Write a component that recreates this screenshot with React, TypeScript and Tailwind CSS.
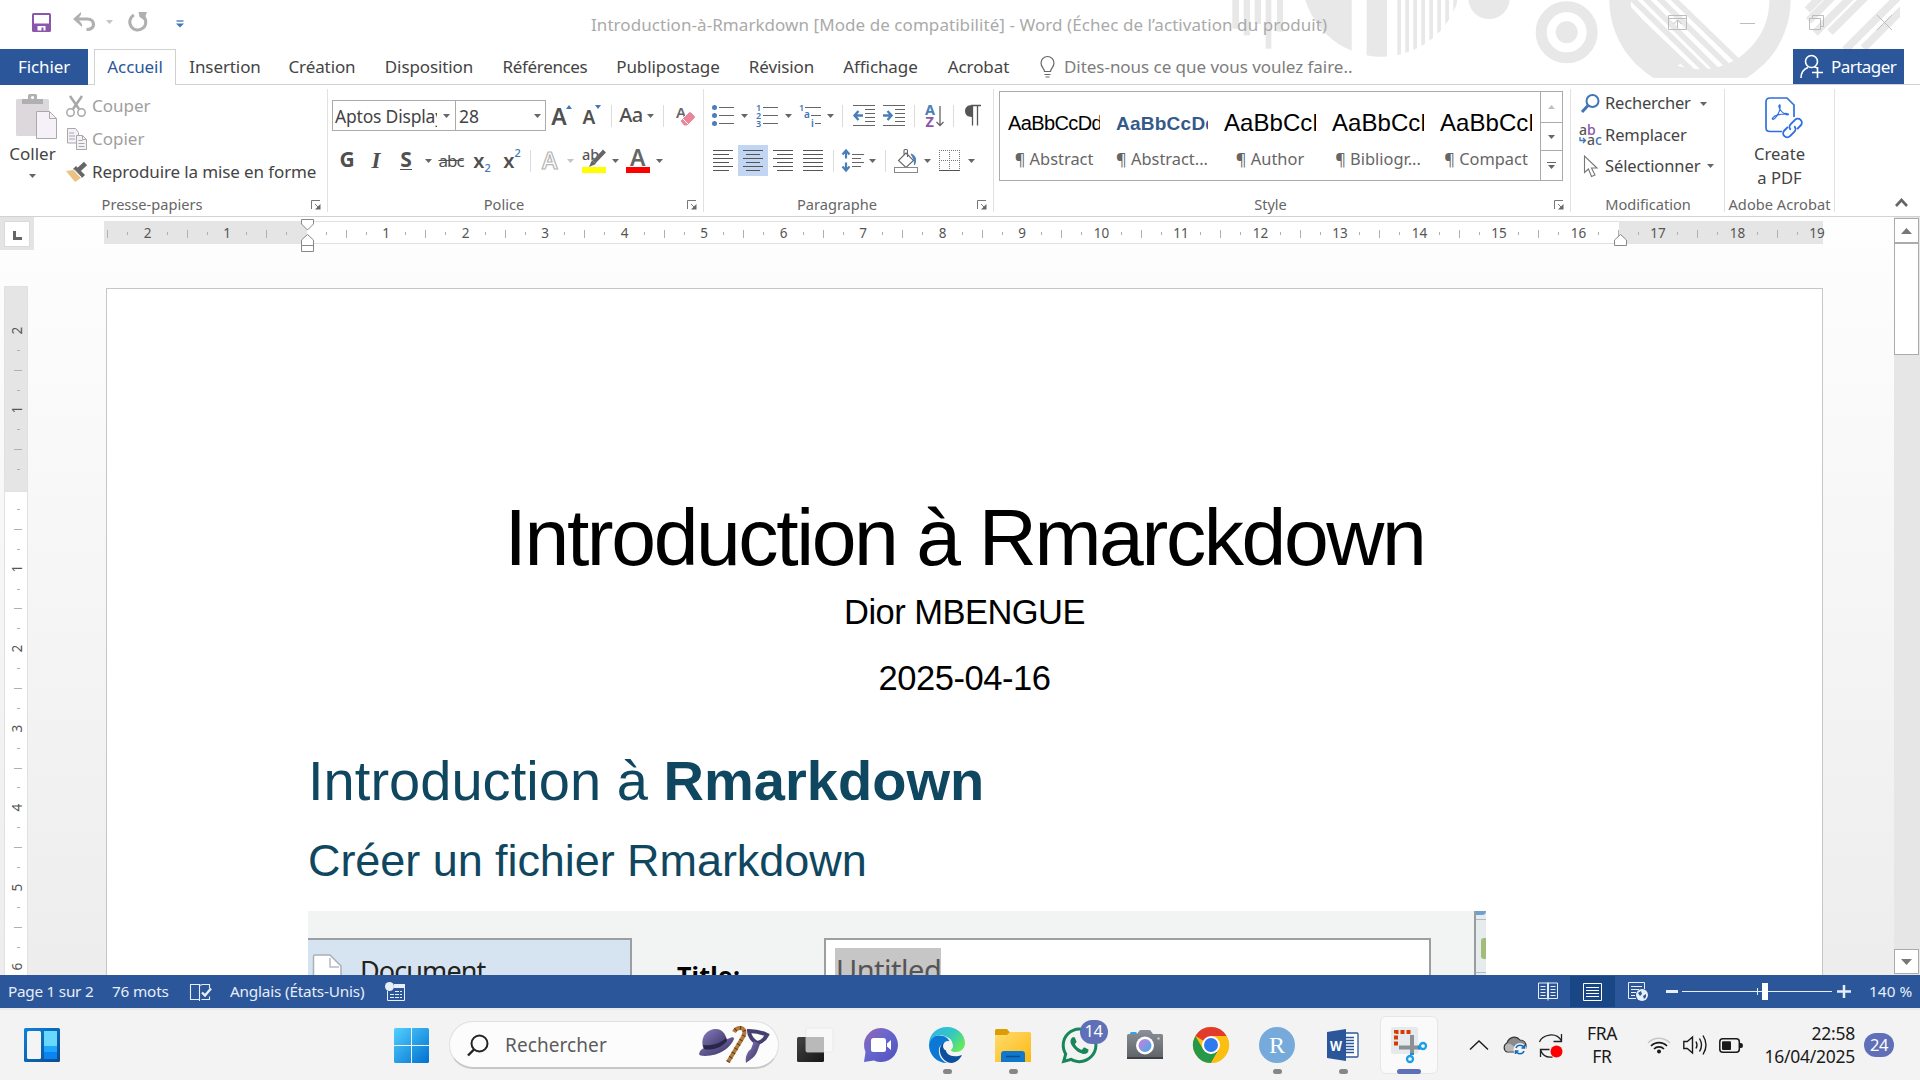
import React from "react";
import { FaWhatsapp } from "react-icons/fa";

type Kids = { children?: React.ReactNode };

/* ---------- small helpers ---------- */
function Ico({ w, h, children, cls = "" }: Kids & { w: number; h: number; cls?: string }) {
  return (
    <svg width={w} height={h} viewBox={`0 0 ${w} ${h}`} fill="none" className={`block shrink-0 overflow-visible ${cls}`}>
      {children}
    </svg>
  );
}

function Slot({ cls, children }: Kids & { cls: string }) {
  return <div className={`flex h-[31px] shrink-0 items-center justify-center ${cls}`}>{children}</div>;
}

function Caret({ color = "#666" }: { color?: string }) {
  return (
    <Ico w={7} h={4}>
      <path d="M0 0h7L3.5 4z" fill={color} />
    </Ico>
  );
}

function Sep({ cls }: { cls: string }) {
  return (
    <Slot cls={cls}>
      <div className="h-[22px] w-px bg-[#dcdcdc]" />
    </Slot>
  );
}

function Launcher() {
  return (
    <Ico w={10} h={10}>
      <path d="M.5 9V.5H9M4 4l3 3" stroke="#777" />
      <path d="M9.5 4v5.5H4z" fill="#666" />
    </Ico>
  );
}

function Group({ cls, label, launcher, labelCls = "", children }: Kids & { cls: string; label: string; launcher?: boolean; labelCls?: string }) {
  return (
    <section className={`relative flex h-[131px] shrink-0 flex-col ${cls}`}>
      <div className="h-[108px]">{children}</div>
      <div className={`flex h-[22px] items-center justify-center whitespace-nowrap text-[14.600px] leading-none text-[#666] ${labelCls}`}>{label}</div>
      {launcher && (
        <div className="absolute bottom-[6px] right-[7px]">
          <Launcher />
        </div>
      )}
      <div className="absolute bottom-[4px] right-0 top-[4px] w-px bg-[#e1e1e1]" />
    </section>
  );
}

/* ---------- title bar ---------- */
function Decoration() {
  const bars = [310, 592, 616, 640, 664, 688, 712, 736, 760];
  return (
    <svg width="700" height="78" viewBox="0 0 2100 234" className="absolute left-[1200px] top-0">
      <defs>
        <clipPath id="disc"><circle cx="545" cy="-69" r="239" /></clipPath>
        <clipPath id="inner"><circle cx="1500" cy="0" r="212" /></clipPath>
      </defs>
      <g fill="#e8e8e8">
        <rect x="97" width="20" height="86" />
        <rect x="131" width="19" height="106" />
        <rect x="164" width="19" height="72" />
        <rect x="197" width="17" height="146" />
        <rect x="231" width="18" height="95" />
        <g clipPath="url(#disc)">
          {bars.map((x, i) => (
            <rect key={x} x={i === 0 ? 300 : x} width={i === 0 ? 155 : 11} height="180" />
          ))}
          <rect x="500" width="61" height="180" />
        </g>
        <circle cx="867" cy="-5" r="62" />
        <circle cx="1100" cy="97" r="33" />
      </g>
      <circle cx="1100" cy="97" r="76.5" fill="none" stroke="#e8e8e8" strokeWidth="33" />
      <circle cx="1500" cy="0" r="240" fill="none" stroke="#e8e8e8" strokeWidth="64" />
      <g stroke="#e8e8e8" clipPath="url(#inner)">
        <path d="M1258 30 L1420 210" strokeWidth="64" />
        <path d="M1290 35 L1500 235M1290 -10 L1530 225M1330 -10 L1560 220M1372 -10 L1590 205M1414 -10 L1620 190" strokeWidth="17" />
      </g>
      <g stroke="#e8e8e8" strokeWidth="23">
        <path d="M1822 30 L1862 -10M1826 62 L1905 -17M1845 99 L1955 -11M1890 97 L2000 -13M1935 150 L2095 -10M1990 145 L2140 -5" />
      </g>
    </svg>
  );
}

function TitleBar() {
  return (
    <div className="relative flex h-[49px] items-center">
      <div className="flex w-[200px] items-center pb-[5px] pl-[32px]">
        <Ico w={19} h={19}>
          <path d="M0 1.500q0-1.500 1.500-1.500h16q1.500 0 1.500 1.500v16q0 1.500-1.500 1.500h-16Q0 19 0 17.500z" fill="#8a57ad" />
          <path d="M2 2h15v8.500H2z" fill="#fff" />
          <path d="M5.500 17.500v-4.500h8v4.500h-2v-3h-2v3z" fill="#fff" />
        </Ico>
        <Ico w={22} h={20} cls="ml-[22px]">
          <path d="M3 7h11c5 0 6.500 3 6.500 5.500 0 3.500-3 5-7 5" stroke="#b0b0b0" strokeWidth="3.200" />
          <path d="M0 7L8 0v2.500L5 7l4 5v3z" fill="#b0b0b0" />
        </Ico>
        <div className="ml-[11px]"><Caret color="#c4c4c4" /></div>
        <Ico w={20} h={20} cls="ml-[15px]">
          <path d="M6 3A8 8 0 1 0 15 4" stroke="#b0b0b0" strokeWidth="3" />
          <path d="M10.500 0h8.500l-3 8-4.500-3z" fill="#b0b0b0" />
        </Ico>
        <Ico w={8} h={8} cls="ml-[28px] mt-1">
          <path d="M.5 1h7" stroke="#4076b4" strokeWidth="1.300" />
          <path d="M0 3.500h8l-4 4z" fill="#4076b4" />
        </Ico>
      </div>
      <div className="relative z-10 ml-[391px] w-[740px] whitespace-nowrap text-[17px] leading-none tracking-[0.060px] text-[#aaa]">
        Introduction-à-Rmarkdown [Mode de compatibilité] - Word (Échec de l’activation du produit)
      </div>
      <div className="relative z-10 ml-[337px] flex w-[224px] items-center justify-between pb-[4px]">
        <Ico w={19} h={15}>
          <path d="M.5.5h18v14H.5zM.5 3.500h18M9.500 13V5M5.500 9l4-4 4 4" stroke="#bdbdbd" />
        </Ico>
        <Ico w={15} h={15} cls="ml-[5px]"><path d="M0 8.500h15" stroke="#bdbdbd" /></Ico>
        <Ico w={15} h={15} cls="ml-[5px]"><path d="M.5 3.500h11v11H.5zM3.500 3V.5h11v11H12" stroke="#bdbdbd" /></Ico>
        <Ico w={15} h={15} cls="ml-[5px]"><path d="M0 0l15 15M15 0L0 15" stroke="#bdbdbd" /></Ico>
      </div>
    </div>
  );
}

/* ---------- tabs ---------- */
function Tabs() {
  const tab = "flex h-[36px] shrink-0 items-center justify-center whitespace-nowrap border-b border-[#d2d2d2] pb-px";
  return (
    <nav className="relative z-10 flex h-[36px] text-[17px] leading-none tracking-[-0.1px] text-[#444]">
      <div className="flex w-[88px] items-center justify-center bg-[#2b579a] pb-[2px] text-white">Fichier</div>
      <div className="w-[6px] border-b border-[#d2d2d2]" />
      <div className="flex w-[82px] items-center justify-center border-x border-t border-[#d2d2d2] bg-white pb-[3px] text-[#2b579a]">Accueil</div>
      <div className={`${tab} w-[98px]`}>Insertion</div>
      <div className={`${tab} w-[96px]`}>Création</div>
      <div className={`${tab} w-[118px]`}>Disposition</div>
      <div className={`${tab} w-[114px] tracking-[-0.350px]`}>Références</div>
      <div className={`${tab} w-[132px]`}>Publipostage</div>
      <div className={`${tab} w-[95px]`}>Révision</div>
      <div className={`${tab} w-[103px]`}>Affichage</div>
      <div className={`${tab} w-[93px]`}>Acrobat</div>
      <div className="flex flex-1 items-center border-b border-[#d2d2d2] pl-[15px] text-[#7d7d7d]">
        <Ico w={15} h={22}>
          <path d="M4.500 15.500c0-3-3.500-4-3.500-8.500a6.500 6.500 0 0 1 13 0c0 4.500-3.500 5.500-3.500 8.500zM4.500 18.500h6M5.500 21h4" stroke="#666" strokeWidth="1.200" />
        </Ico>
        <span className="ml-[9px] text-[17px] tracking-[-0.040px]">Dites-nous ce que vous voulez faire..</span>
      </div>
      <div className="w-[111px] border-b border-[#d2d2d2]">
        <div className="flex h-[35px] items-center bg-[#2b579a] pl-[7px] text-white">
          <Ico w={24} h={25}>
            <path d="M1 24c0-6 3-9 7-10.500M17 14c-1-.7-2-1-3-1.300" stroke="#fff" strokeWidth="1.600" />
            <circle cx="11.500" cy="7.500" r="6" stroke="#fff" strokeWidth="1.600" />
            <path d="M17.500 13v11M12 18.500h11" stroke="#fff" strokeWidth="1.600" />
          </Ico>
          <span className="ml-[7px] tracking-[-0.550px]">Partager</span>
        </div>
      </div>
      <div className="w-[16px] border-b border-[#d2d2d2]" />
    </nav>
  );
}

/* ---------- ribbon ---------- */
function Clipboard() {
  return (
    <Group cls="w-[328px]" label="Presse-papiers" launcher labelCls="pr-[24px]">
      <div className="flex">
        <div className="flex w-[66px] flex-col items-center pr-px pt-[9px]">
          <Ico w={41} h={46} cls="ml-[8px]">
            <rect x="0" y="5" width="33" height="37" rx="1.500" fill="#dcd8dc" />
            <path d="M6 10V5h6V1.500Q12 0 13.500 0h6Q21 0 21 1.500V5h6v5z" fill="#b0b0b0" />
            <circle cx="16.500" cy="3.500" r="1.600" fill="#fff" />
            <path d="M20.500 17.500h13l7 7v20h-20z" fill="#f6f1f8" stroke="#aaa" />
            <path d="M33.500 17.500v7h7" stroke="#aaa" />
          </Ico>
          <div className="mt-[5px] text-[17px] leading-none text-[#444]">Coller</div>
          <div className="mt-[12px]"><Caret /></div>
        </div>
        <div className="flex flex-col pt-[4px] text-[17px] leading-none text-[#a0a0a0]">
          <div className="flex h-[33px] items-center">
            <Ico w={21} h={22}>
              <circle cx="4.500" cy="17.500" r="3.700" stroke="#a8a8a8" strokeWidth="1.500" />
              <circle cx="15.500" cy="17.500" r="3.700" stroke="#a8a8a8" strokeWidth="1.500" />
              <path d="M4 1l9 13M16 1L7 14" stroke="#a8a8a8" strokeWidth="2.500" />
            </Ico>
            <span className="ml-[5px]">Couper</span>
          </div>
          <div className="flex h-[33px] items-center">
            <Ico w={21} h={22}>
              <path d="M1.500.5h8l3 4V15h-11z" fill="#f6f1f8" stroke="#a8a8a8" />
              <path d="M3 5h5M3 8h6M3 11h6" stroke="#a8a8a8" />
              <path d="M10.500 7.500h6l4 4v10h-10z" fill="#f6f1f8" stroke="#a8a8a8" />
              <path d="M12.500 12.500h4M12.500 15.500h6M12.500 18.500h6M16.500 7.500v4h4" stroke="#a8a8a8" />
            </Ico>
            <span className="ml-[5px]">Copier</span>
          </div>
          <div className="flex h-[33px] items-center text-[#444]">
            <Ico w={22} h={20}>
              <path d="M0 9L7 8l8 8-6 4z" fill="#eac282" />
              <path d="M7 7l3-3 9 9-3 3z" fill="#666" />
              <path d="M12.500 8l7-6.500" stroke="#666" strokeWidth="4.500" />
              <path d="M8 7.500l7.500 8" stroke="#fff" />
            </Ico>
            <span className="ml-[4px] whitespace-nowrap text-[17px] tracking-[-0.120px]">Reproduire la mise en forme</span>
          </div>
        </div>
      </div>
    </Group>
  );
}

function FontGroup() {
  return (
    <Group cls="w-[376px]" label="Police" launcher labelCls="pr-[24px]">
      <div className="pl-[4px] pt-[15px] text-[#505050]">
        <div className="flex leading-none">
          <div className="flex h-[31px] w-[124px] items-center border border-[#ababab] pl-[2px] pr-[4px] text-[17.500px] text-[#444]">
            <span className="w-[102px] overflow-hidden whitespace-nowrap pb-[3px] pt-[5px] tracking-[-0.200px]">Aptos Display</span>
            <div className="ml-[6px]"><Caret /></div>
          </div>
          <div className="-ml-px flex h-[31px] w-[91px] items-center justify-between border border-[#ababab] pl-[3px] pr-[4px] text-[17.500px] text-[#444]">
            <span className="pt-[2px]">28</span><Caret />
          </div>
          <Slot cls="w-[31px]">
            <span className="pt-[2px] text-[23px] font-semibold leading-none">A</span>
            <Ico w={6} h={4} cls="-ml-[1px] -mt-[18px]"><path d="M0 4l3-4 3 4z" fill="#4076b4" /></Ico>
          </Slot>
          <Slot cls="w-[30px]">
            <span className="pt-[4px] text-[19px] font-semibold leading-none">A</span>
            <Ico w={6} h={4} cls="-mt-[18px]"><path d="M0 0l3 4 3-4z" fill="#4076b4" /></Ico>
          </Slot>
          <Sep cls="w-[8px]" />
          <Slot cls="w-[32px]"><span className="pb-[2px] text-[20px] font-medium tracking-[-0.5px]">Aa</span></Slot>
          <Slot cls="w-[6px]"><Caret /></Slot>
          <Sep cls="w-[20px]" />
          <Slot cls="w-[26px]">
            <Ico w={20} h={22}>
              <text x="0" y="13" fontSize="15" fontFamily="Noto Sans" fontWeight="600" fill="#666">A</text>
              <path d="M4 16L13 7q1-1 2 0l4 4q1 1 0 2l-8 8h-3z" fill="#e8869a" stroke="#fff" />
              <path d="M6.500 13.500l6 6" stroke="#fff" />
            </Ico>
          </Slot>
        </div>
        <div className="mt-[14px] flex leading-none">
          <Slot cls="w-[30px]"><span className="pb-[2px] text-[21px] font-bold">G</span></Slot>
          <Slot cls="w-[28px]"><span className="pb-px font-[Liberation_Serif] text-[23px] font-bold italic">I</span></Slot>
          <Slot cls="w-[32px]"><span className="mb-px border-b border-[#505050] pb-px text-[21px] font-bold leading-[17px]">S</span></Slot>
          <Slot cls="w-[13px]"><Caret /></Slot>
          <Slot cls="w-[32px]"><span className="text-[17px] leading-none tracking-[-1px] line-through">abc</span></Slot>
          <Slot cls="w-[30px]"><span className="text-[20px] font-semibold">x</span><span className="pt-[14px] text-[11px] font-medium text-[#4076b4]">2</span></Slot>
          <Slot cls="w-[30px]"><span className="text-[20px] font-semibold">x</span><span className="pb-[16px] text-[11px] font-medium text-[#4076b4]">2</span></Slot>
          <Sep cls="w-[7px]" />
          <Slot cls="w-[32px]">
            <Ico w={18} h={20}>
              <text x="1" y="18" fontSize="23" fontFamily="Noto Sans" fontWeight="600" fill="#fff" stroke="#b5b5b5" strokeWidth="1.200">A</text>
            </Ico>
          </Slot>
          <Slot cls="w-[8px]"><Caret color="#c4c4c4" /></Slot>
          <Slot cls="w-[40px]">
            <Ico w={24} h={24}>
              <text x="0" y="11" fontSize="14.500" fontFamily="Noto Sans" fontWeight="500" fill="#555">ab</text>
              <path d="M22.500 2L12 13" stroke="#666" strokeWidth="4" />
              <path d="M10 11l4 4-7 3z" fill="#666" />
              <rect y="18" width="24" height="6" fill="#ff0" />
            </Ico>
          </Slot>
          <Slot cls="w-[3px]"><Caret /></Slot>
          <Slot cls="w-[41px]">
            <Ico w={24} h={24}>
              <text x="4" y="17" fontSize="23" fontFamily="Noto Sans" fontWeight="600" fill="#666">A</text>
              <rect y="18" width="24" height="6" fill="#f00" />
            </Ico>
          </Slot>
          <Slot cls="w-[3px]"><Caret /></Slot>
        </div>
      </div>
    </Group>
  );
}

function Lines({ d }: { d: string }) {
  return <Ico w={20} h={21}><path d={d} stroke="#555" /></Ico>;
}

function Paragraph() {
  const t = { fontFamily: "Noto Sans", fontWeight: 600, fill: "#4076b4" };
  return (
    <Group cls="w-[290px]" label="Paragraphe" launcher labelCls="pr-[24px]">
      <div className="pl-[4px] pt-[15px]">
        <div className="flex pl-px">
          <Slot cls="w-[28px]">
            <Ico w={22} h={21}>
              <circle cx="2.500" cy="2.500" r="2.500" fill="#4a7ebb" /><circle cx="2.500" cy="10.500" r="2.500" fill="#4a7ebb" /><circle cx="2.500" cy="18.500" r="2.500" fill="#4a7ebb" />
              <path d="M7 2.500h15M7 10.500h15M7 18.500h15" stroke="#666" />
            </Ico>
          </Slot>
          <Slot cls="w-[14px]"><Caret /></Slot>
          <Slot cls="w-[31px]">
            <Ico w={22} h={21}>
              <text {...t} fontSize="9" x="0" y="6">1</text><text {...t} fontSize="9" x="0" y="14">2</text><text {...t} fontSize="9" x="0" y="22">3</text>
              <path d="M7 2.500h15M7 10.500h15M7 18.500h15" stroke="#666" />
            </Ico>
          </Slot>
          <Slot cls="w-[13px]"><Caret /></Slot>
          <Slot cls="w-[30px]">
            <Ico w={22} h={21}>
              <text {...t} fontSize="9" x="0" y="6">1</text><text {...t} fontSize="10" x="5" y="13">a</text><text {...t} fontSize="10" x="12" y="22">i</text>
              <path d="M6 2.500h16M12 10.500h10M16 18.500h6" stroke="#666" />
            </Ico>
          </Slot>
          <Slot cls="w-[10px]"><Caret /></Slot>
          <Sep cls="w-[14px]" />
          <Slot cls="w-[30px]">
            <Ico w={22} h={21}>
              <path d="M0 .5h22M12 4.500h10M12 8.500h10M12 12.500h10M12 16.500h10M0 20.500h22" stroke="#666" />
              <path d="M10 10.500H2M5.500 6l-4 4.500 4 4.500" stroke="#4a7ebb" strokeWidth="2.400" />
            </Ico>
          </Slot>
          <Slot cls="w-[30px]">
            <Ico w={22} h={21}>
              <path d="M0 .5h22M12 4.500h10M12 8.500h10M12 12.500h10M12 16.500h10M0 20.500h22" stroke="#666" />
              <path d="M0 10.500h8M4.500 6l4 4.500-4 4.500" stroke="#4a7ebb" strokeWidth="2.400" />
            </Ico>
          </Slot>
          <Sep cls="w-[10px]" />
          <Slot cls="w-[30px]">
            <Ico w={19} h={22}>
              <text x="0" y="10" fontFamily="Noto Sans" fontSize="14.500" fontWeight="700" fill="#4a7ebb">A</text>
              <text x=".5" y="22" fontFamily="Noto Sans" fontSize="14.500" fontWeight="700" fill="#8a57ad">Z</text>
              <path d="M15 1v19M11.500 17l3.500 3.500 3.500-3.500" stroke="#666" strokeWidth="1.300" />
            </Ico>
          </Slot>
          <Sep cls="w-[9px]" />
          <Slot cls="w-[30px]">
            <Ico w={16} h={21}>
              <path d="M6 .5h10M7.500 1v19.500M12.500 1v19.500" stroke="#555" strokeWidth="1.300" />
              <path d="M7 0v12C2 12 0 9 0 6s2-6 7-6z" fill="#555" />
            </Ico>
          </Slot>
        </div>
        <div className="mt-[14px] flex">
          <Slot cls="w-[30px]"><Lines d="M0 .5h20M0 4.500h16M0 8.500h20M0 12.500h16M0 16.500h20M0 20.500h16" /></Slot>
          <Slot cls="w-[30px] bg-[#c2d5f2]"><Lines d="M0 .5h20M3 4.500h14M0 8.500h20M3 12.500h14M0 16.500h20M3 20.500h14" /></Slot>
          <Slot cls="w-[30px]"><Lines d="M0 .5h20M4 4.500h16M0 8.500h20M4 12.500h16M0 16.500h20M4 20.500h16" /></Slot>
          <Slot cls="w-[30px]"><Lines d="M0 .5h20M0 4.500h20M0 8.500h20M0 12.500h20M0 16.500h20M0 20.500h20" /></Slot>
          <Sep cls="w-[10px]" />
          <Slot cls="w-[29px]">
            <Ico w={22} h={23}>
              <path d="M4 1.500v8M4 13.500v8M.5 5.500l3.500-4 3.500 4M.5 17.500l3.500 4 3.500-4" stroke="#4a7ebb" strokeWidth="2.200" />
              <path d="M10 5.500h12M10 9.500h9M10 13.500h12M10 17.500h9" stroke="#666" />
            </Ico>
          </Slot>
          <Slot cls="w-[11px]"><Caret /></Slot>
          <Sep cls="w-[14px]" />
          <Slot cls="w-[28px]">
            <Ico w={24} h={24}>
              <path d="M12 4l7.500 7.500L12 18.500 4.500 11.500zM10 6V1.500q0-1 1-1h1.500q1 0 1 1V8" stroke="#666" strokeWidth="1.100" />
              <path d="M17 5c4 1 6 5 3.500 11 0-5-1-7-3.500-11z" fill="#4a7ebb" stroke="#4a7ebb" />
              <rect x=".5" y="18.500" width="23" height="5" fill="#fff" stroke="#888" />
            </Ico>
          </Slot>
          <Slot cls="w-[15px]"><Caret /></Slot>
          <Slot cls="w-[29px]">
            <Ico w={21} h={21}>
              <path d="M.5 0v20M10.500 0v20M20.500 0v20M0 .5h21M0 10.500h21" stroke="#777" strokeDasharray="1 1" />
              <path d="M0 20.500h21" stroke="#555" />
            </Ico>
          </Slot>
          <Slot cls="w-[15px]"><Caret /></Slot>
        </div>
      </div>
    </Group>
  );
}

function Styles() {
  const items = [
    ["AaBbCcDd", "¶ Abstract", "text-[20px] tracking-[-0.600px] text-black"],
    ["AaBbCcDd", "¶ Abstract...", "text-[19px] font-bold tracking-[0.250px] text-[#345a8a]"],
    ["AaBbCcDd", "¶ Author", "text-[24px] tracking-[0.050px] text-black"],
    ["AaBbCcDd", "¶ Bibliogr...", "text-[24px] tracking-[0.050px] text-black"],
    ["AaBbCcDd", "¶ Compact", "text-[24px] tracking-[0.050px] text-black"],
  ];
  return (
    <Group cls="w-[577px]" label="Style" launcher labelCls="pr-[24px]">
      <div className="pl-[5px] pt-[6px]">
        <div className="flex h-[90px] w-[564px] border border-[#ababab]">
          {items.map(([a, b, c]) => (
            <div key={b} className="flex w-[108px] shrink-0 flex-col items-center">
              <div className={`mt-[16px] flex h-[30px] w-[92px] items-center overflow-hidden whitespace-nowrap font-[Liberation_Sans] leading-none ${c}`}>{a}</div>
              <div className="mt-[13px] whitespace-nowrap text-[16.400px] leading-none text-[#666]">{b}</div>
            </div>
          ))}
          <div className="flex flex-1 flex-col border-l border-[#ababab]">
            <div className="flex h-[30px] items-center justify-center"><Ico w={7} h={4}><path d="M0 4h7L3.500 0z" fill="#c0c0c0" /></Ico></div>
            <div className="flex h-[28px] items-center justify-center border-t border-[#ababab]"><Caret /></div>
            <div className="flex flex-1 flex-col items-center justify-center gap-[2px] border-t border-[#ababab]">
              <div className="h-px w-[9px] bg-[#666]" />
              <Caret />
            </div>
          </div>
        </div>
      </div>
    </Group>
  );
}

function Ribbon() {
  return (
    <div className="flex h-[132px] border-b border-[#d2d2d2]">
      <Clipboard />
      <FontGroup />
      <Paragraph />
      <Styles />
      <Group cls="w-[154px]" label="Modification">
        <div className="flex flex-col pl-[8px] pt-[3px] text-[17px] leading-none text-[#444]">
          <div className="flex h-[31px] items-center">
            <Ico w={22} h={20}>
              <circle cx="13.500" cy="7" r="6" stroke="#4076b4" strokeWidth="2" />
              <path d="M9 11.500L3 18" stroke="#4076b4" strokeWidth="3" />
            </Ico>
            <span className="ml-[4px] w-[86px] text-[16.500px] tracking-[-0.200px]">Rechercher</span>
            <div className="ml-[9px]"><Caret /></div>
          </div>
          <div className="flex h-[31px] items-center pt-px">
            <Ico w={22} h={22}>
              <text x="0" y="10.500" fontFamily="Noto Sans" fontSize="14" fontWeight="500" fill="#555">a<tspan fill="#8a57ad">b</tspan></text>
              <text x="8" y="21" fontFamily="Noto Sans" fontSize="14" fontWeight="500" fill="#555">a<tspan fill="#4076b4">c</tspan></text>
              <path d="M1 13v3.500h5M4 14l2.500 2.500L4 19" stroke="#4076b4" strokeWidth="1.300" />
            </Ico>
            <span className="ml-[4px] text-[16.500px] tracking-[-0.120px]">Remplacer</span>
          </div>
          <div className="flex h-[31px] items-center pt-px">
            <Ico w={22} h={22}>
              <path d="M5.500 1v16.500l4-3.500 3 7.500 3.500-1.500-3.500-7h5.500z" stroke="#777" strokeWidth="1.100" />
            </Ico>
            <span className="ml-[4px] w-[97px] text-[16.500px] tracking-[-0.100px]">Sélectionner</span>
            <div className="ml-[5px]"><Caret /></div>
          </div>
        </div>
      </Group>
      <Group cls="w-[110px]" label="Adobe Acrobat" labelCls="pr-px tracking-[0.040px]">
        <div className="flex flex-col items-center pr-px pt-[12px] text-[16.600px] leading-[24px] text-[#444]">
          <Ico w={38} h={42} cls="ml-[8px]">
            <path d="M17 34.500H5q-4 0-4-4V5q0-4 4-4h17l7 7v12" stroke="#2f6fe0" strokeWidth="1.700" />
            <path d="M7 22c2-4 6-5 14-5M7 22c3 2 9-8 8-14-2-1-2 6 7 10 3 0 1-2-3-1.500" stroke="#2f6fe0" strokeWidth="1.200" />
            <g transform="rotate(-45 27.500 31)" stroke="#2f6fe0" strokeWidth="1.900">
              <path d="M25 27h-5a4 4 0 0 0 0 8h6a4 4 0 0 0 4-4M30 35h5a4 4 0 0 0 0-8h-6a4 4 0 0 0-4 4" />
            </g>
          </Ico>
          <div className="mt-[3px]">Create</div>
          <div>a PDF</div>
        </div>
      </Group>
      <div className="flex flex-1 items-end justify-end pb-[9px] pr-[12px]">
        <Ico w={13} h={9}><path d="M1 8l5.500-6L12 8" stroke="#666" strokeWidth="2.600" /></Ico>
      </div>
    </div>
  );
}

/* ---------- rulers ---------- */
function marks(from: number, to: number) {
  const out: { v: number; kind: "num" | "half" | "quarter" }[] = [];
  for (let q = from * 4; q <= to * 4; q++) {
    out.push({ v: q / 4, kind: q % 4 === 0 ? "num" : q % 2 === 0 ? "half" : "quarter" });
  }
  return out;
}

function HorizontalRuler() {
  return (
    <div className="flex h-[34px] shrink-0">
      <div className="flex h-[33px] w-[34px] items-center justify-center bg-[#e4e4e4]">
        <div className="flex h-[26px] w-[26px] items-center justify-center border border-[#dadada] bg-white">
          <Ico w={9} h={9} cls="mt-[3px]"><path d="M1.500 0v7.500H9" stroke="#666" strokeWidth="3" /></Ico>
        </div>
      </div>
      <div className="relative ml-[70px] mt-[4px] flex h-[23px] w-[1719px]">
        <div className="w-[203px] bg-[#e5e5e5]" />
        <div className="w-[1312px] border-y border-[#e1e1e1] bg-white" />
        <div className="flex-1 bg-[#e5e5e5]" />
        <div className="absolute left-[-6.200px] top-px flex h-[23px] items-center">
          {marks(-2.5, 19).map((m) => (
            <div key={m.v} className="flex w-[19.885px] shrink-0 justify-center text-[13.500px] leading-none text-[#555]">
              {m.kind === "num" ? (m.v === 0 ? "" : Math.abs(m.v)) : <div className={m.kind === "half" ? "h-[8px] w-px bg-[#b0b0b0]" : "h-[3px] w-px bg-[#b0b0b0]"} />}
            </div>
          ))}
        </div>
        <Ico w={13} h={31} cls="absolute left-[197px] top-[-2px]">
          <path d="M.5.500h12V5l-6 6-6-6z" fill="#fff" stroke="#888" />
          <path d="M.5 32.500V21l6-5.500 6 5.500v11.500zM.5 26.500h12" fill="#fff" stroke="#888" />
        </Ico>
        <Ico w={13} h={12} cls="absolute left-[1510px] top-[13px]">
          <path d="M.5 11.500V6l6-5.500 6 5.500v5.500z" fill="#fff" stroke="#888" />
        </Ico>
      </div>
    </div>
  );
}

function VerticalRuler() {
  return (
    <div className="relative ml-[4px] mt-[35px] flex w-[24px] flex-col overflow-hidden border-x border-t border-[#e1e1e1] bg-white">
      <div className="h-[205px] shrink-0 border-b border-[#e1e1e1] bg-[#e5e5e5]" />
      <div className="absolute left-px top-[33.500px] flex w-[24px] flex-col">
        {marks(-2, 6).map((m) => (
          <div key={m.v} className="flex h-[19.900px] shrink-0 items-center justify-center text-[13.500px] leading-none text-[#555]">
            {m.kind === "num" ? (
              <span className="-rotate-90">{m.v === 0 ? "" : Math.abs(m.v)}</span>
            ) : (
              <div className={m.kind === "half" ? "h-px w-[8px] bg-[#b0b0b0]" : "h-px w-[3px] bg-[#b0b0b0]"} />
            )}
          </div>
        ))}
      </div>
    </div>
  );
}

/* ---------- document ---------- */
function EmbeddedDialog() {
  return (
    <div className="ml-[201px] flex h-[64px] w-[1178px] overflow-hidden bg-[#f2f4f4]">
      <div className="mt-[27px] flex h-[60px] w-[324px] border-r-2 border-t-2 border-[#9c9fa2] bg-[#d5e4f0] text-[28px] leading-none text-[#222]">
        <Ico w={32} h={36} cls="ml-[4px] mt-[14px]">
          <path d="M1.500 36V2.500Q1.500 1 3 1h15l11 11v24z" fill="#fff" stroke="#a8b0b8" strokeWidth="1.500" />
          <path d="M18 4v9h9" stroke="#b8bcc0" strokeWidth="1.500" />
        </Ico>
        <div className="ml-[16px] mt-[17px] text-[27px] tracking-[-0.900px]">Document</div>
      </div>
      <div className="ml-[45px] mt-[52px] w-[147px] text-[25px] font-bold leading-none tracking-[0.150px] text-black">Title:</div>
      <div className="mt-[27px] h-[60px] w-[607px] border-x-2 border-t-2 border-[#9c9fa2] bg-white pl-[9px] pt-[8px]">
        <div className="h-[50px] w-[106px] bg-[#c6c6c6] pl-px pt-[7px] text-[29px] leading-none tracking-[-0.500px] text-[#555]">Untitled</div>
      </div>
      <div className="ml-[43px] h-[64px] w-[12px] border-l-2 border-[#9a9da0] bg-[#e6ebed]">
        <div className="h-[4px] w-[10px] rounded-br-full bg-[#6fa0cf]" />
        <div className="mt-[4px] h-px bg-[#b5b9bb]" />
        <div className="ml-[5px] mt-[18px] h-[21px] w-[5px] rounded-l-[3px] bg-[#a3bd78]" />
        <div className="mt-[13px] h-px bg-[#b5b9bb]" />
      </div>
    </div>
  );
}

function Page() {
  return (
    <article className="ml-[78px] mt-[37px] w-[1717px] overflow-hidden border-x border-t border-[#c6c6c6] bg-white font-[Liberation_Sans] text-black">
      <div className="flex flex-col items-center">
        <h1 className="mt-[203px] h-[90px] whitespace-nowrap text-[80.500px] leading-[90px] tracking-[-2.400px]">Introduction à Rmarckdown</h1>
        <p className="mt-[11px] h-[38px] whitespace-nowrap text-[34.500px] leading-[38px] tracking-[-0.530px]">Dior MBENGUE</p>
        <p className="mt-[28px] h-[38px] whitespace-nowrap text-[34.500px] leading-[38px] tracking-[-0.430px]">2025-04-16</p>
      </div>
      <h2 className="ml-[201px] mt-[52px] h-[64px] whitespace-nowrap text-[56px] leading-[64px] tracking-[0.040px] text-[#0f4761]">
        Introduction à <b>Rmarkdown</b>
      </h2>
      <h3 className="ml-[201px] mt-[22px] h-[52px] whitespace-nowrap text-[45px] leading-[52px] tracking-[-0.060px] text-[#0f4761]">Créer un fichier Rmarkdown</h3>
      <div className="mt-[24px] font-[Noto_Sans]"><EmbeddedDialog /></div>
    </article>
  );
}

function ScrollBar() {
  return (
    <div className="ml-auto flex w-[26px] flex-col bg-[#e6e6e6] pb-px pr-px pt-px">
      <div className="flex h-[25px] items-center justify-center border border-[#ababab] bg-white"><Ico w={11} h={6}><path d="M0 6h11L5.500 0z" fill="#777" /></Ico></div>
      <div className="h-[112px] border border-[#ababab] bg-white" />
      <div className="mt-auto flex h-[25px] items-center justify-center border border-[#ababab] bg-white"><Ico w={11} h={6}><path d="M0 0h11L5.500 6z" fill="#777" /></Ico></div>
    </div>
  );
}

/* ---------- status bar ---------- */
function StatusBar() {
  return (
    <footer className="flex h-[33px] items-center whitespace-nowrap bg-[#2b579a] pl-[8px] text-[15.300px] leading-none tracking-[-0.180px] text-[#e8eef7]">
      <span className="w-[104px] tracking-[-0.250px]">Page 1 sur 2</span>
      <span className="w-[78px]">76 mots</span>
      <Ico w={21} h={18}>
        <path d="M9.500 16.500h-9V1.500h9zM9.500 1.500l2 1M9.500 16.500V18M11.500 1.500h8v4M11.500 16.500h8v-3" stroke="#e8eef7" strokeWidth="1.100" />
        <path d="M12 9.500l3 3 6-7" stroke="#e8eef7" strokeWidth="2.400" />
      </Ico>
      <span className="ml-[19px] w-[155px]">Anglais (États-Unis)</span>
      <Ico w={20} h={19}>
        <path d="M2.500 9v9.500h17V3H9" stroke="#e8eef7" />
        <path d="M9 2h11v4H9z" fill="#e8eef7" />
        <circle cx="4.500" cy="4.500" r="4.500" fill="#e8eef7" />
        <path d="M10 9.500h7M5 12.500h12M5 15.500h12" stroke="#e8eef7" strokeDasharray="4 1" />
      </Ico>
      <div className="ml-auto flex items-center">
        <Ico w={20} h={19}>
          <path d="M9.500 16.500h-9V1h9zM10.500 16.500h9V1h-9zM10 0v18.500M2.500 4.500h5M2.500 7.500h5M2.500 10.500h5M2.500 13.500h5M12.500 4.500h5M12.500 7.500h5M12.500 10.500h5M12.500 13.500h5" stroke="#e8eef7" />
        </Ico>
        <div className="ml-[12px] flex h-[31px] w-[45px] items-center justify-center bg-[#194785]">
          <Ico w={19} h={18}>
            <path d="M.5.500h18v17H.5zM3 4.500h13M3 7.500h13M3 10.500h13M3 13.500h13" stroke="#fff" />
          </Ico>
        </div>
        <Ico w={21} h={19} cls="ml-[13px]">
          <path d="M8 16.500H.5V.500h16V7M3 4.500h11M3 7.500h8M3 10.500h5M3 13.500h4" stroke="#e8eef7" />
          <circle cx="14" cy="13" r="6" fill="#e8eef7" />
          <path d="M10 11l3-2 1 3-2 2zM15 14l3-2v3l-2 2z" fill="#2b579a" />
        </Ico>
        <div className="ml-[17px] h-[3px] w-[12px] bg-[#e8eef7]" />
        <div className="relative ml-[4px] flex h-[17px] w-[150px] items-center">
          <div className="h-px w-full bg-[#e8eef7]" />
          <div className="absolute left-[75px] top-[5px] h-[7px] w-px bg-[#e8eef7]" />
          <div className="absolute left-[80px] top-0 h-[17px] w-[6px] bg-white" />
        </div>
        <Ico w={14} h={13} cls="ml-[5px]"><path d="M0 6.500h14M7 0v13" stroke="#e8eef7" strokeWidth="2.500" /></Ico>
        <span className="ml-[18px] w-[51px] tracking-[0.080px]">140 %</span>
      </div>
    </footer>
  );
}

/* ---------- taskbar ---------- */
function TaskItem({ dot, active, children }: Kids & { dot?: boolean; active?: boolean }) {
  return (
    <div className="relative flex h-[70px] w-[66px] shrink-0 items-center justify-center">
      {active && <div className="absolute inset-x-[4px] inset-y-[6px] rounded-[6px] border border-[#e6e6e6] bg-[#fafafa]" />}
      <div className="relative">{children}</div>
      {dot && <div className="absolute bottom-[6px] h-[5px] w-[9px] rounded-full bg-[#868686]" />}
      {active && <div className="absolute bottom-[6px] h-[5px] w-[24px] rounded-full bg-[#6070b8]" />}
    </div>
  );
}

function SearchBox() {
  return (
    <div className="ml-[20px] flex h-[48px] w-[330px] items-center rounded-full border border-b-2 border-[#e0e0e0] border-b-[#c8c8c8] bg-[#fcfcfc] pl-[17px]">
      <Ico w={22} h={22}>
        <circle cx="12.500" cy="9.500" r="8" stroke="#222" strokeWidth="2" />
        <path d="M7 15.500L1 21.500" stroke="#222" strokeWidth="2.400" />
      </Ico>
      <span className="ml-[16px] w-[104px] pt-px text-[19px] leading-none tracking-[0.080px] text-[#5c5c5c]">Rechercher</span>
      <Ico w={70} h={38} cls="ml-[90px]">
        <defs>
          <linearGradient id="hat" x1="0" y1="0" x2="1" y2="1"><stop stopColor="#8a7cc0" /><stop offset="1" stopColor="#332f5c" /></linearGradient>
        </defs>
        <path d="M0 28C1 24 3 23 5 22L31 12c2-1 4-1 4 1-3 8-14 17-29 17-4 0-6-1-6-2z" fill="url(#hat)" />
        <path d="M4 21C1 10 9 3 17 3c6 0 9 4 11 11-5 7-15 11-23 9z" fill="url(#hat)" />
        <path d="M4 19c8 1 17-1 23-7l1 3c-6 7-15 10-23 8z" fill="#29264a" />
        <path d="M29 36L44 11c3-5 1-9-3-9-3 0-5 2-6 4" stroke="#b27a3c" strokeWidth="4" />
        <path d="M29 36L44 11c3-5 1-9-3-9-3 0-5 2-6 4" stroke="#5f3d1c" strokeWidth="4" strokeDasharray="1 4" />
        <path d="M50 5c6 0 12 1 18 4-2 4-5 7-10 8-4-2-8-7-8-12z" stroke="#45406f" strokeWidth="4" />
        <path d="M55 15l6 3-3 8c-2 5-7 8-11 11-1-6 1-11 5-14z" fill="url(#hat)" />
      </Ico>
    </div>
  );
}

function Taskbar() {
  return (
    <div className="flex h-[72px] items-center border-t-2 border-[#e9eaee] bg-[#f3f3f3]">
      <Ico w={36} h={34} cls="ml-[24px]">
        <defs>
          <linearGradient id="wg" x1="0" y1="0" x2="1" y2="1"><stop stopColor="#0a84dc" /><stop offset="1" stopColor="#0d4a8f" /></linearGradient>
          <linearGradient id="win" x1="0" y1="0" x2="1" y2="1"><stop stopColor="#52d0ff" /><stop offset="1" stopColor="#0070cf" /></linearGradient>
          <linearGradient id="dk" x1="0" y1="0" x2="1" y2="1"><stop stopColor="#444" /><stop offset="1" stopColor="#161616" /></linearGradient>
          <linearGradient id="chat" x1="0" y1="0" x2="1" y2="1"><stop stopColor="#9a62b0" /><stop offset=".4" stopColor="#6a68cc" /><stop offset="1" stopColor="#4d50c0" /></linearGradient>
          <linearGradient id="fold" x1="0" y1="0" x2="1" y2="1"><stop stopColor="#ffdc70" /><stop offset="1" stopColor="#fdb813" /></linearGradient>
          <linearGradient id="cam" x1="0" y1="0" x2="0" y2="1"><stop stopColor="#8a9096" /><stop offset="1" stopColor="#5c6268" /></linearGradient>
          <linearGradient id="lens" x1="0" y1="0" x2="1" y2="1"><stop offset=".3" stopColor="#a98ae0" /><stop offset="1" stopColor="#35b2e8" /></linearGradient>
          <linearGradient id="edgeTop" x1="0" y1="0" x2="1" y2=".6"><stop stopColor="#2cb4ee" /><stop offset=".6" stopColor="#35c8c0" /><stop offset="1" stopColor="#64e860" /></linearGradient>
        </defs>
        <rect width="36" height="34" rx="1.500" fill="url(#wg)" />
        <rect x="3" y="3" width="14" height="28" rx="1.500" fill="#f4f4f4" />
        <path d="M20 3h13v15H20z" fill="#69d8ff" /><path d="M20 18h13v6H20z" fill="#1ea6ff" /><path d="M20 24h13v7H20z" fill="#0a84f0" />
      </Ico>
      <Ico w={35} h={35} cls="ml-[334px]">
        <path d="M0 1.500Q0 0 1.500 0H17v17H0zM18 0h15.500Q35 0 35 1.500V17H18zM0 18h17v17H1.500Q0 35 0 33.500zM18 18h17v15.500q0 1.500-1.500 1.500H18z" fill="url(#win)" />
      </Ico>
      <SearchBox />
      <div className="ml-[3px] flex">
        <TaskItem>
          <Ico w={36} h={34}>
            <rect x="0" y="9" width="27" height="25" rx="1.500" fill="url(#dk)" />
            <rect x="9" y="0" width="27" height="24" rx="1.500" fill="#f8f8f8" stroke="#e4e4e4" strokeWidth=".7" />
            <path d="M9 9h18v15H9z" fill="#b9b9b9" />
          </Ico>
        </TaskItem>
        <TaskItem>
          <Ico w={34} h={34}>
            <path d="M17 0a17 17 0 1 1-7 32.500L0 34l1.500-10A17 17 0 0 1 17 0z" fill="url(#chat)" />
            <rect x="7" y="10" width="15" height="14" rx="2.500" fill="#fff" />
            <path d="M23 15.500l4-3.500v10l-4-3.500z" fill="#fff" />
          </Ico>
        </TaskItem>
        <TaskItem dot>
          <Ico w={36} h={36}>
            <path d="M18 0C28 0 36 7 36 16c0 6-5 9-9 9-5 0-6-2-5-4 3-4 1-9-4-11C10 6 3 9 0 17 0 7 8 0 18 0z" fill="url(#edgeTop)" />
            <path d="M0 18C1 10 8 7 14 9c5 1 8 6 6 9-5-3-11 0-10 7 0 5 4 9 8 11C8 36 0 28 0 18z" fill="#0a78d4" />
            <path d="M20 14c-6 0-10 5-9 11s6 11 12 11c5-1 8-4 10-8-5 2-12 2-15-2-2-3-1-6 2-8z" fill="#0c4f9c" />
            <circle cx="19" cy="19" r="5" fill="#f3f3f3" />
            <path d="M18 22c2 6 10 6 17 3-3 4-12 5-15 2z" fill="#f3f3f3" />
          </Ico>
        </TaskItem>
        <TaskItem dot>
          <Ico w={36} h={33}>
            <path d="M0 1.500Q0 0 1.500 0H12l3 3.500v4H0z" fill="#dd9c05" />
            <path d="M0 6h12l3-3h19.500Q36 3 36 4.500V33H0z" fill="url(#fold)" />
            <path d="M6 33v-8q0-3 3-3h18q3 0 3 3v8z" fill="#0f78cc" />
            <path d="M11 27.500h14" stroke="#0a4d8a" strokeWidth="1.500" />
          </Ico>
        </TaskItem>
        <TaskItem>
          <FaWhatsapp className="h-[41px] w-[41px] text-[#17875a]" />
          <div className="absolute left-[21px] top-[-5px] flex h-[24px] w-[28px] items-center justify-center rounded-full bg-[#6070b8] text-[16.500px] leading-none tracking-[-0.500px] text-white">14</div>
        </TaskItem>
        <TaskItem>
          <Ico w={36} h={30}>
            <path d="M3 3.500Q3 2 4.500 2h4Q10 2 10 4v3H3z" fill="#28a8ea" />
            <path d="M0 5.500Q0 4 1.500 4H10l2.500-3.500Q13 0 14 0h8q1 0 1.500.5L26 4h8.500Q36 4 36 5.500V29H0z" fill="url(#cam)" />
            <path d="M0 27h36v2H0z" fill="#3e4246" />
            <circle cx="18" cy="15.500" r="9" fill="#fff" /><circle cx="18" cy="15.500" r="6.500" fill="url(#lens)" />
            <circle cx="31.500" cy="8.500" r="1.300" fill="#c4c8cc" />
          </Ico>
        </TaskItem>
        <TaskItem>
          <Ico w={36} h={36}>
            <circle cx="18" cy="18" r="18" fill="#fbbf12" />
            <path d="M18 18L2.400 9a18 18 0 0 1 31.200 0z" fill="#e23b2e" />
            <path d="M2.400 9L10.200 22.500 18 27l7.800-4.500L18 36A18 18 0 0 1 2.400 9z" fill="#279847" />
            <path d="M18 36l7.800-13.500L18 9h15.600A18 18 0 0 1 18 36z" fill="#fbbf12" />
            <circle cx="18" cy="18" r="9" fill="#fff" /><circle cx="18" cy="18" r="7" fill="#2f7bee" />
          </Ico>
        </TaskItem>
        <TaskItem dot>
          <div className="flex h-[36px] w-[36px] items-center justify-center rounded-full bg-[#75aadb] font-[Liberation_Serif] text-[24px] leading-none text-white">R</div>
        </TaskItem>
        <TaskItem dot>
          <Ico w={32} h={32}>
            <rect x="16" y="4" width="15" height="24" rx="1" fill="#fff" stroke="#2b579a" strokeWidth="1.300" />
            <path d="M19 8.500h8M19 11.500h8M19 14.500h8M19 17.500h8M19 20.500h8M19 23.500h8" stroke="#2b579a" strokeWidth="1.300" />
            <path d="M0 3L19 0v32L0 29z" fill="#2b579a" />
            <text x="3" y="21.500" fontFamily="Noto Sans" fontSize="14.500" fontWeight="700" fill="#fff" textLength="12" lengthAdjust="spacingAndGlyphs">W</text>
          </Ico>
        </TaskItem>
        <TaskItem active>
          <Ico w={36} h={36}>
            <rect width="27" height="27" rx="2" fill="#e6eaed" />
            <path d="M5 18.500V5h16" stroke="#d83b01" strokeWidth="4" strokeDasharray="4 2" />
            <path d="M21 8v20M8 20.500h20" stroke="#8a9096" strokeWidth="4" />
            <path d="M27 21l3-1M21 26v2" stroke="#1490df" strokeWidth="4" />
            <circle cx="32" cy="19" r="3" stroke="#1a9fe8" strokeWidth="2.300" /><circle cx="19" cy="32" r="3" stroke="#1a9fe8" strokeWidth="2.300" />
          </Ico>
        </TaskItem>
      </div>
      <div className="ml-auto flex items-center text-[#1a1a1a]">
        <Ico w={18} h={10}><path d="M0 9.500L9 1l9 8.500" stroke="#1a1a1a" strokeWidth="1.400" /></Ico>
        <Ico w={24} h={19} cls="ml-[14px]">
          <path d="M5 16a5 5 0 0 1 0-9C7 1 14-1 18 4c4 0 6 3 6 6 0 4-2 6-5 6z" fill="#8a8a8a" stroke="#333" strokeWidth="1.200" />
          <path d="M5 15.500a4.500 4.500 0 0 1 .5-8c3 0 6 1 9 8z" fill="#b8b8b8" />
          <circle cx="18" cy="13.500" r="6.500" fill="#f3f3f3" />
          <path d="M14 12a4.300 4.300 0 0 1 8 0M22 15a4.300 4.300 0 0 1-8 0M22.500 9v3h-3M13.500 18v-3h3" stroke="#0f6cbd" strokeWidth="1.500" />
        </Ico>
        <Ico w={24} h={25} cls="ml-[13px]">
          <path d="M.5 9C3 2 17-2 22.500 8M22.500 1v7.500h-8M1.500 24v-7.500h9M1.500 17c2 5 6 8 12 7" stroke="#222" strokeWidth="1.300" />
          <circle cx="17.500" cy="18.500" r="6" fill="#f00" />
        </Ico>
        <div className="ml-[20px] w-[38px] text-center text-[17.500px] leading-[23px] tracking-[-0.300px]">
          <div>FRA</div>
          <div>FR</div>
        </div>
        <Ico w={22} h={17} cls="ml-[27px]">
          <path d="M0 6a15 15 0 0 1 22 0" stroke="#c8c8c8" strokeWidth="1.500" />
          <path d="M3 9a11 11 0 0 1 16 0M6 12a7 7 0 0 1 10 0" stroke="#1a1a1a" strokeWidth="1.700" />
          <circle cx="11" cy="14.500" r="2" fill="#1a1a1a" />
        </Ico>
        <Ico w={24} h={20} cls="ml-[13px]">
          <path d="M.8 6.500h3.500L9.500 2v16l-5.200-4.500H.8zM13 6.500q2 3.500 0 7M16.500 3.500q4 6.500 0 13M20 .5q6 9.500 0 19" stroke="#1a1a1a" strokeWidth="1.400" />
        </Ico>
        <Ico w={24} h={15} cls="ml-[12px]">
          <rect x=".8" y=".8" width="19.500" height="13.500" rx="3" stroke="#1a1a1a" strokeWidth="1.500" />
          <rect x="3" y="3.200" width="9" height="8.800" rx="1" fill="#1a1a1a" />
          <path d="M21 5h1q2 0 2 2.500T22 10h-1z" fill="#1a1a1a" />
        </Ico>
        <div className="ml-[18px] w-[94px] whitespace-nowrap text-right text-[17.500px] leading-[23px] tracking-[-0.250px]">
          <div>22:58</div>
          <div>16/04/2025</div>
        </div>
        <div className="ml-[9px] mr-[26px] flex h-[24px] w-[30px] items-center justify-center rounded-full bg-[#6070b8] text-[16.500px] leading-none tracking-[-0.500px] text-white">24</div>
      </div>
    </div>
  );
}

export default function App() {
  return (
    <div className="relative flex h-[1080px] w-[1920px] flex-col overflow-hidden bg-white font-[Noto_Sans,sans-serif]">
      <Decoration />
      <TitleBar />
      <Tabs />
      <Ribbon />
      <main className="flex h-[758px] bg-linear-to-b from-[#fefefe] to-[#ededed]">
        <div className="flex flex-col">
          <HorizontalRuler />
          <div className="flex flex-1">
            <VerticalRuler />
            <Page />
          </div>
        </div>
        <ScrollBar />
      </main>
      <StatusBar />
      <Taskbar />
    </div>
  );
}
